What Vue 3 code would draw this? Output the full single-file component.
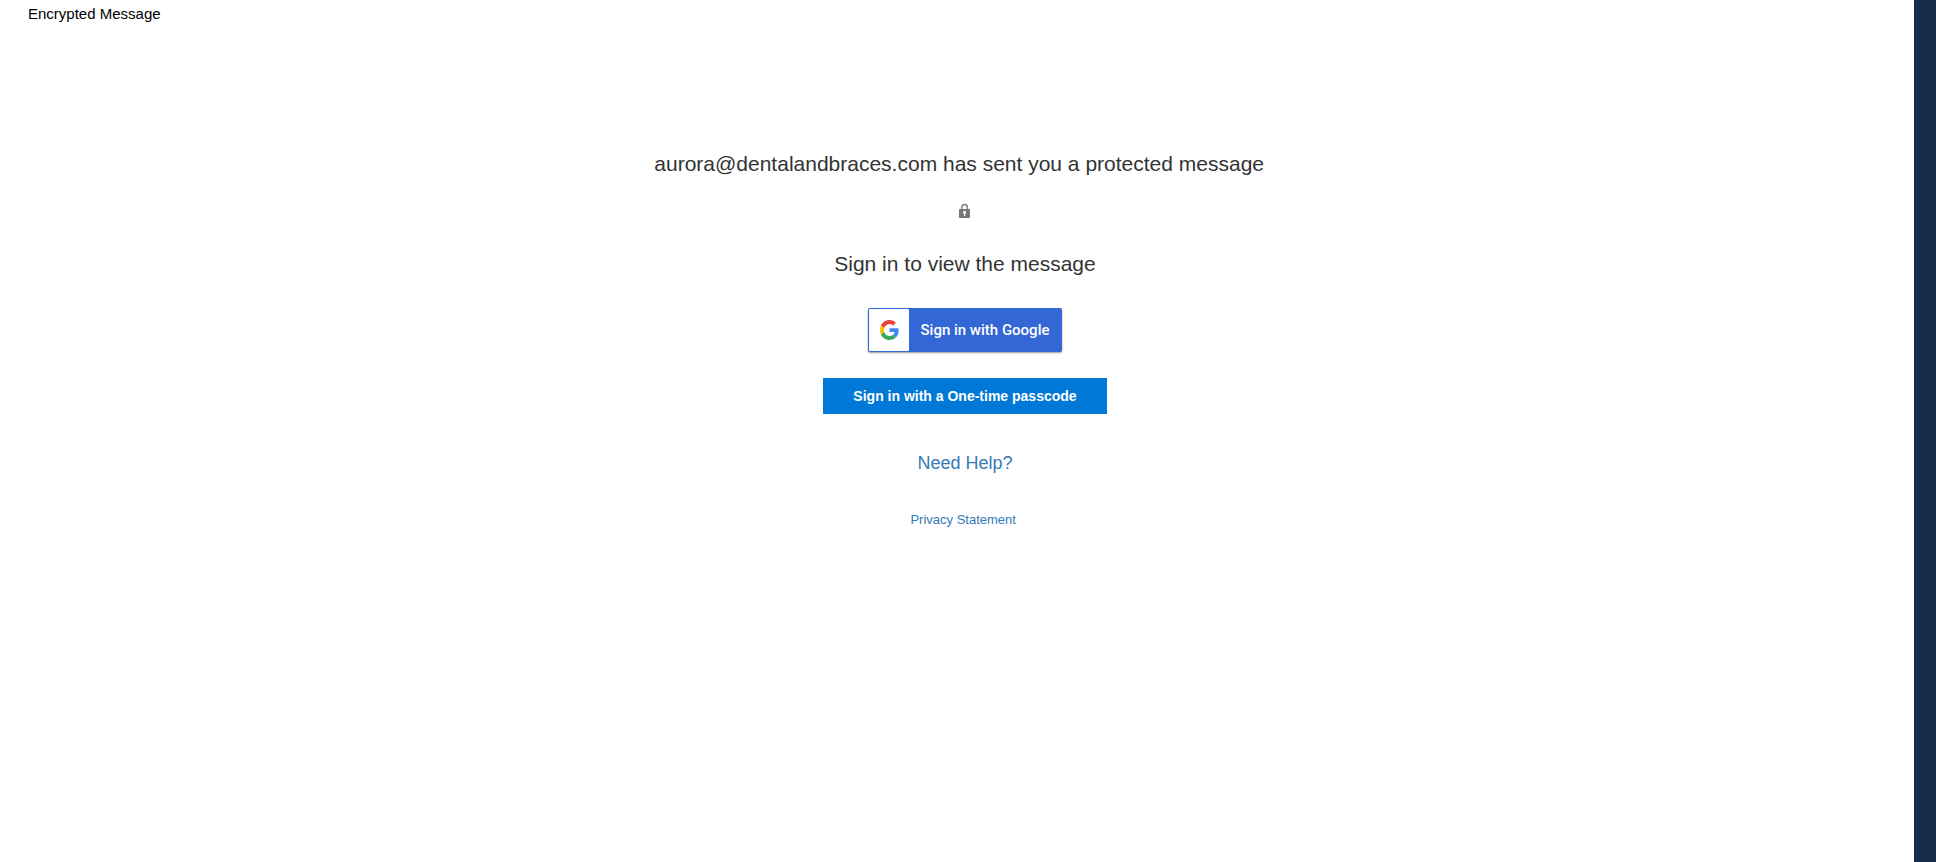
<script setup>
const sender = 'aurora@dentalandbraces.com'
</script>

<template>
  <div class="page">
    <div class="content">
      <header class="top">Encrypted Message</header>
      <main class="panel">
        <h1 class="title">{{ sender }} has sent you a protected message&nbsp;&nbsp;</h1>
        <svg class="lock" width="13" height="16" viewBox="0 0 13 16" aria-hidden="true">
          <path d="M2.7 7V4.9a2.9 3.3 0 0 1 5.8 0V7" transform="translate(0 0)" fill="none" stroke="#858585" stroke-width="1.5" />
          <rect x="0" y="6" width="11" height="9" rx="0.8" fill="#777" />
          <circle cx="5.5" cy="9.2" r="1.5" fill="#fff" />
          <rect x="5" y="9.5" width="1.2" height="3.5" fill="#fff" />
        </svg>
        <h2 class="title">Sign in to view the message</h2>
        <button class="google" type="button">
          <span class="mark">
            <svg width="19" height="20" viewBox="0 0 48 48" preserveAspectRatio="none" aria-hidden="true">
              <path fill="#EA4335" d="M24 9.5c3.54 0 6.71 1.22 9.21 3.6l6.85-6.85C35.9 2.38 30.47 0 24 0 14.62 0 6.51 5.38 2.56 13.22l7.98 6.19C12.43 13.72 17.74 9.5 24 9.5z" />
              <path fill="#4285F4" d="M46.98 24.55c0-1.57-.15-3.09-.38-4.55H24v9.02h12.94c-.58 2.96-2.26 5.48-4.78 7.18l7.73 6c4.51-4.18 7.09-10.36 7.09-17.65z" />
              <path fill="#FBBC05" d="M10.53 28.59c-.48-1.45-.76-2.99-.76-4.59s.27-3.14.76-4.59l-7.98-6.19C.92 16.46 0 20.12 0 24c0 3.88.92 7.54 2.56 10.78l7.97-6.19z" />
              <path fill="#34A853" d="M24 48c6.48 0 11.93-2.13 15.89-5.81l-7.73-6c-2.15 1.45-4.92 2.3-8.16 2.3-6.26 0-11.57-4.22-13.47-9.91l-7.98 6.19C6.51 42.62 14.62 48 24 48z" />
            </svg>
          </span>
          <span class="label">Sign in with Google</span>
        </button>
        <button class="passcode" type="button">Sign in with a One-time passcode</button>
        <a class="help" href="#help">Need Help?</a>
        <a class="privacy" href="#privacy">Privacy Statement&nbsp;</a>
      </main>
    </div>
    <div class="edge"></div>
  </div>
</template>

<style>
body {
  margin: 0;
  background: #fff;
}
</style>

<style scoped>
.page {
  display: flex;
  min-height: 100vh;
  font-family: "Liberation Sans", Arial, sans-serif;
  color: #333;
}
.content {
  flex: 1;
  padding-left: 16px;
}
.edge {
  width: 22px;
  background: #152c4b;
}
.top {
  padding: 4px 12px 0;
  font-size: 15px;
  line-height: 20px;
  color: #000;
}
.panel {
  display: flex;
  flex-direction: column;
  align-items: center;
  padding-top: 128px;
}
.title {
  margin: 0;
  font-size: 21px;
  font-weight: 400;
  line-height: 24px;
}
.lock {
  margin: 27px 0 33px;
}
.google {
  display: flex;
  align-items: stretch;
  box-sizing: border-box;
  width: 194px;
  height: 44px;
  margin-top: 32px;
  padding: 1px;
  border: 0;
  border-radius: 2px;
  background: #3367d6;
  box-shadow: 0 1px 2px rgba(0, 0, 0, 0.4);
  color: #fff;
  cursor: pointer;
}
.mark {
  display: flex;
  align-items: center;
  justify-content: center;
  width: 40px;
  border-radius: 1px;
  background: #fff;
}
.label {
  flex: 1;
  font-family: Roboto, sans-serif;
  font-size: 15px;
  font-weight: 500;
  line-height: 42px;
  text-align: center;
  white-space: nowrap;
}
.passcode {
  height: 36px;
  margin-top: 26px;
  padding: 0 30px;
  border: 0;
  background: #0078d7;
  color: #fff;
  font-family: inherit;
  font-size: 14px;
  font-weight: 700;
  cursor: pointer;
}
.help,
.privacy {
  color: #337ab7;
  text-decoration: none;
}
.help {
  margin-top: 38px;
  font-size: 18px;
  line-height: 22px;
}
.privacy {
  margin-top: 37px;
  font-size: 13px;
  line-height: 18px;
}
</style>
